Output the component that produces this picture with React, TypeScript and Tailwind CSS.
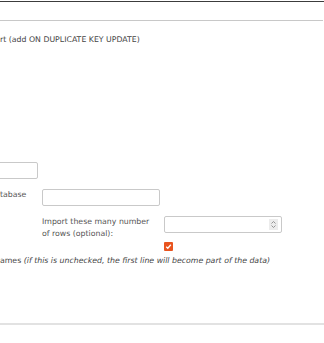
import React from "react";

const font = { fontFamily: '"DejaVu Sans", "Liberation Sans", sans-serif' };

function TextInput({ className }: { className: string }) {
  return <div className={`h-[17px] shrink-0 rounded-[2px] border border-[#c9c9c9] bg-white ${className}`} />;
}

function NumberInput() {
  return (
    <div className="flex h-[17px] w-[118px] shrink-0 items-center justify-end rounded-[2px] border border-[#c9c9c9] bg-white pr-[3px]">
      <div className="flex h-[11px] w-[9px] flex-col items-center justify-center bg-[#ececec]">
        <svg width="7" height="9" viewBox="0 0 7 9" fill="none" stroke="#8a8a8a" strokeWidth="0.9">
          <path d="M1.5 3.5 L3.5 1.5 L5.5 3.5" />
          <path d="M1.5 5.5 L3.5 7.5 L5.5 5.5" />
        </svg>
      </div>
    </div>
  );
}

function Checkbox() {
  return (
    <span className="flex h-[9px] w-[9px] items-center justify-center rounded-[1px] bg-[#e9541f]">
      <svg width="7" height="7" viewBox="0 0 7 7" fill="none" stroke="white" strokeWidth="1.3">
        <path d="M1.2 3.7 L2.8 5.2 L5.8 1.8" />
      </svg>
    </span>
  );
}

export default function App() {
  return (
    <div className="h-[343px] w-[324px] overflow-hidden bg-white text-[7.8px] text-[#454545]" style={font}>
      <div className="mt-px h-px bg-[#3c3c3c]" />
      <div className="mt-[18px] mr-px h-px bg-[#c8c8c8]" />
      <div className="mt-[13px] whitespace-nowrap leading-[12px]">rt (add ON DUPLICATE KEY UPDATE)</div>

      <TextInput className="mt-[116px] ml-[-2px] w-[40px]" />

      <div className="mt-[10px] flex h-[17px] items-start">
        <div className="w-[42px] leading-[12px] text-[#555]">tabase</div>
        <TextInput className="w-[118px]" />
      </div>

      <div className="mt-[10px] flex h-[17px] items-start pl-[42px]">
        <div className="w-[122px] leading-[12px] text-[#555]">
          Import these many number
          <br />
          of rows (optional):
        </div>
        <NumberInput />
      </div>

      <div className="mt-[9px] pl-[164px]">
        <Checkbox />
      </div>

      <div className="mt-[4px] whitespace-nowrap leading-[12px]">
        ames <i>(if this is unchecked, the first line will become part of the data)</i>
      </div>

      <div className="mt-[56px] h-[2px] bg-[#e2e2e2]" />
    </div>
  );
}
